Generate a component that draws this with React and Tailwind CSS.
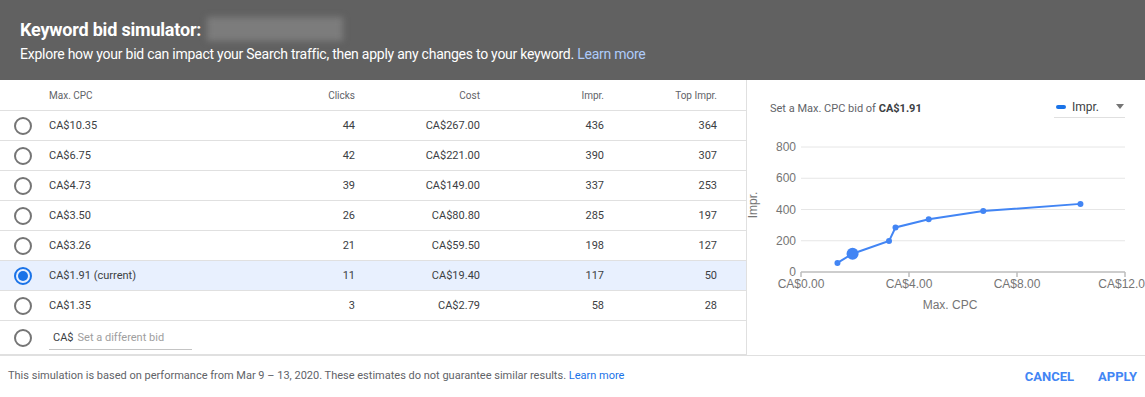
import React from 'react';

const rows = [
    { cpc: 'CA$10.35', clicks: 44, cost: 'CA$267.00', impr: 436, top: 364 },
    { cpc: 'CA$6.75', clicks: 42, cost: 'CA$221.00', impr: 390, top: 307 },
    { cpc: 'CA$4.73', clicks: 39, cost: 'CA$149.00', impr: 337, top: 253 },
    { cpc: 'CA$3.50', clicks: 26, cost: 'CA$80.80', impr: 285, top: 197 },
    { cpc: 'CA$3.26', clicks: 21, cost: 'CA$59.50', impr: 198, top: 127 },
    { cpc: 'CA$1.91 (current)', clicks: 11, cost: 'CA$19.40', impr: 117, top: 50, selected: true },
    { cpc: 'CA$1.35', clicks: 3, cost: 'CA$2.79', impr: 58, top: 28 },
];

const points = [
    [1.35, 58], [1.91, 117], [3.26, 198], [3.5, 285], [4.73, 337], [6.75, 390], [10.35, 436],
];

const Radio = ({ checked }) => (
    <span className={`w-[18px] h-[18px] rounded-full border-2 flex items-center justify-center ${checked ? 'border-[#1a73e8]' : 'border-[#757575]'}`}>
        {checked && <span className="w-[10px] h-[10px] rounded-full bg-[#1a73e8]" />}
    </span>
);

const Chart = () => {
    // x 0 -> 12 maps to 54 -> 378, y 0 -> 800 maps to 152 -> 27
    const px = (v) => 54 + v * 27;
    const py = (v) => 152 - v * 0.15625;
    const line = points.map(([x, y]) => `${px(x)},${py(y)}`).join(' ');
    return (
        <svg width="398" height="200" className="block" style={{ fontFamily: 'Arial, "Liberation Sans", sans-serif' }}>
            {[800, 600, 400, 200].map(v => (
                <line key={v} x1="54" x2="378" y1={py(v)} y2={py(v)} stroke="#e6e6e6" strokeWidth="1" />
            ))}
            {[800, 600, 400, 200, 0].map(v => (
                <text key={v} x="49" y={py(v) + 4} textAnchor="end" fontSize="12" fill="#757575">{v}</text>
            ))}
            <line x1="54" x2="378" y1={py(0)} y2={py(0)} stroke="#bdbdbd" strokeWidth="1.5" />
            {[0, 4, 8, 12].map(v => (
                <line key={v} x1={px(v)} x2={px(v)} y1={py(0)} y2={py(0) + 5} stroke="#bdbdbd" strokeWidth="1.5" />
            ))}
            {[['CA$0.00', 0], ['CA$4.00', 4], ['CA$8.00', 8], ['CA$12.00', 12]].map(([t, v]) => (
                <text key={t} x={px(v)} y={py(0) + 16} textAnchor="middle" fontSize="12" fill="#757575">{t}</text>
            ))}
            <text x="203" y={py(0) + 37} textAnchor="middle" fontSize="12" fill="#757575">Max. CPC</text>
            <text x="0" y="0" transform="translate(10 85) rotate(-90)" textAnchor="middle" fontSize="12" fill="#757575">Impr.</text>
            <polyline points={line} fill="none" stroke="#4285f4" strokeWidth="2" />
            {points.map(([x, y]) => (
                <circle key={x} cx={px(x)} cy={py(y)} r={x === 1.91 ? 6 : 3} fill="#4285f4" />
            ))}
        </svg>
    );
};

export default function App() {
    return (
        <div className="w-[1145px] h-[397px] bg-white flex flex-col overflow-hidden" style={{ fontFamily: 'Roboto, "Liberation Sans", sans-serif' }}>
            <div className="h-[80px] bg-[#616161] px-5 pt-[15px] shrink-0">
                <div className="flex items-center h-[28px]">
                    <span className="text-[18px] font-bold text-white tracking-[-0.2px]">Keyword bid simulator:</span>
                    <span className="ml-[6px] w-[136px] h-[24px] bg-[#7c7c7c] blur-[3px]" />
                </div>
                <div className="mt-[1px] text-[14px] text-white tracking-[-0.25px]">
                    Explore how your bid can impact your Search traffic, then apply any changes to your keyword.{' '}
                    <span className="text-[#aecbfa]">Learn more</span>
                </div>
            </div>

            <div className="flex h-[275px] shrink-0">
                <div className="w-[747px] border-r border-[#e0e0e0] text-[11px] text-[#3c4043]">
                    <div className="flex items-center h-[31px] border-b border-[#e0e0e0] text-[10px] text-[#5f6368]">
                        <span className="w-[49px]" />
                        <span className="w-[240px]">Max. CPC</span>
                        <span className="w-[66px] text-right">Clicks</span>
                        <span className="w-[125px] text-right">Cost</span>
                        <span className="w-[124px] text-right">Impr.</span>
                        <span className="w-[113px] text-right">Top Impr.</span>
                    </div>
                    {rows.map(r => (
                        <div key={r.cpc} className={`flex items-center h-[30px] border-b border-[#e0e0e0] ${r.selected ? 'bg-[#e8f0fe]' : ''}`}>
                            <span className="w-[49px] flex justify-center pr-[3px]"><Radio checked={r.selected} /></span>
                            <span className="w-[240px] pt-[2px]">{r.cpc}</span>
                            <span className="w-[66px] text-right pt-[2px]">{r.clicks}</span>
                            <span className="w-[125px] text-right pt-[2px]">{r.cost}</span>
                            <span className="w-[124px] text-right pt-[2px]">{r.impr}</span>
                            <span className="w-[113px] text-right pt-[2px]">{r.top}</span>
                        </div>
                    ))}
                    <div className="flex items-center h-[34px] border-b border-[#e0e0e0]">
                        <span className="w-[49px] flex justify-center pr-[3px]"><Radio /></span>
                        <div className="w-[143px] h-[24px] border-b border-[#c4c4c4] flex items-center pl-[4px] pt-[2px]">
                            <span className="text-[#3c4043]">CA$</span>
                            <span className="ml-[4px] text-[#9e9e9e]">Set a different bid</span>
                        </div>
                    </div>
                </div>

                <div className="flex-1 flex flex-col">
                    <div className="h-[40px] flex items-start justify-between pl-[23px] pr-[20px] pt-[21px]">
                        <span className="text-[11px] text-[#5f6368]">Set a Max. CPC bid of <span className="font-bold text-[#3c4043]">CA$1.91</span></span>
                        <div className="w-[71px] h-[22px] -mt-[5px] border-b border-[#e0e0e0] flex items-center pl-[2px]">
                            <span className="w-[10px] h-[4px] rounded-full bg-[#1a73e8]" />
                            <span className="ml-[6px] text-[12px] text-[#3c4043]">Impr.</span>
                            <span className="ml-auto mr-[1px] w-0 h-0 border-l-[4px] border-r-[4px] border-t-[5px] border-l-transparent border-r-transparent border-t-[#757575]" />
                        </div>
                    </div>
                    <Chart />
                </div>
            </div>

            <div className="flex-1 border-t border-[#e0e0e0] flex items-center justify-between pl-[8px] pr-[8px]">
                <span className="text-[11px] text-[#5f6368]">
                    This simulation is based on performance from Mar 9 – 13, 2020. These estimates do not guarantee similar results.{' '}
                    <span className="text-[#1a73e8]">Learn more</span>
                </span>
                <div className="flex items-center gap-[24px] text-[13px] font-bold text-[#4285f4]">
                    <span>CANCEL</span>
                    <span>APPLY</span>
                </div>
            </div>
        </div>
    );
}
